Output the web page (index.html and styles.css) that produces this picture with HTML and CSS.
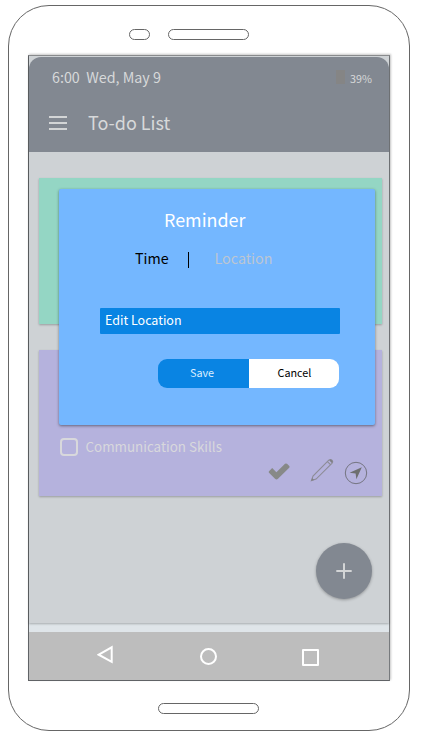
FILE: index.html
```html
<!DOCTYPE html>
<html lang="en">
<head>
<meta charset="utf-8">
<title>To-do List</title>
<link rel="stylesheet" href="styles.css">
</head>
<body>
<div class="phone">
  <div class="sensors"><span class="camera"></span><span class="speaker"></span></div>
  <div class="screen">
    <main class="app">
      <header class="header">
        <div class="status">
          <span class="datetime">6:00&nbsp; Wed, May 9</span>
          <span class="battery"></span>
          <span class="percent">39%</span>
        </div>
        <div class="toolbar">
          <span class="menu"><i></i><i></i><i></i></span>
          <h1>To-do List</h1>
        </div>
      </header>
      <section class="card green"></section>
      <section class="card purple">
        <div class="task"><span class="checkbox"></span><span class="task-name">Communication Skills</span></div>
        <div class="actions">
          <svg class="check" width="22" height="17" viewBox="0 0 22 17"><path d="M1 8.2 4.2 5 8.4 9.2 17 .7Q18 .1 19 .8L21.3 3Q22 4 21.2 4.8L10 15.8Q8.5 17 7 15.8L1 9.8Q.3 9 1 8.2Z" fill="#878988"/></svg>
          <svg class="pencil" width="24" height="24" viewBox="0 0 24 24"><path d="M1.4 22.6 3 18 18.8 2.2Q20.4.8 21.9 2.2T21.9 5.3L6.1 21.1ZM17.4 3.6 20.5 6.7" fill="none" stroke="#8d8c96" stroke-width="1.1"/><path d="M19.2 2.3Q20.6.9 22 2.2T21.7 5ZM1.2 22.8 2.2 20 4.2 22Z" fill="#808086"/></svg>
          <svg class="locate" width="24" height="24" viewBox="0 0 24 24"><circle cx="12" cy="12" r="10.7" fill="none" stroke="#747480" stroke-width="1"/><path d="M17.8 6.2 12.4 18.2 11.6 12.5 5.6 11.7Z" fill="#6e6f70"/></svg>
        </div>
      </section>
      <button class="fab" aria-label="Add"><svg width="16" height="16" viewBox="0 0 16 16"><path d="M8 .3V15.7M.3 8H15.7" stroke="#d3d5d6" stroke-width="2"/></svg></button>
    </main>
    <nav class="nav">
      <svg class="back" width="17" height="20" viewBox="0 0 17 20"><path d="M14.7 2.3V16.9L1.7 9.7Z" fill="none" stroke="#fff" stroke-width="2"/></svg>
      <span class="home"></span>
      <span class="recent"></span>
    </nav>
    <div class="dialog">
      <h2>Reminder</h2>
      <div class="tabs"><span class="time">Time</span><span class="divider"></span><span class="location">Location</span></div>
      <div class="field"><span>Edit Location</span></div>
      <div class="buttons"><button class="save">Save</button><button class="cancel">Cancel</button></div>
    </div>
  </div>
  <span class="bottom-slot"></span>
</div>
</body>
</html>
```
FILE: styles.css
```css
* { box-sizing: border-box; }
body {
  margin: 0;
  width: 422px;
  height: 743px;
  overflow: hidden;
  background: #fff;
  font-family: "Noto Sans CJK SC", "Noto Sans", sans-serif;
}
h1, h2 { margin: 0; font-weight: 400; }
button { border: 0; padding: 0; font: inherit; }
svg { display: block; flex: none; }
.phone {
  width: 402px;
  height: 726px;
  margin: 5px 0 0 8px;
  border: 1px solid #666;
  border-radius: 41px;
  padding-left: 19px;
  display: flex;
  flex-direction: column;
}
.sensors { display: flex; gap: 18px; padding: 23px 0 0 100px; height: 49px; flex: none; }
.camera, .speaker, .bottom-slot { height: 11px; border: 1px solid #666; border-radius: 6px; }
.camera { width: 21px; margin-left: 1px; }
.speaker { width: 81px; }
.bottom-slot { width: 101px; margin: 22px 0 0 130px; flex: none; }
.screen {
  position: relative;
  width: 362px;
  height: 626px;
  flex: none;
  border: 1px solid #606366;
  border-top-color: #8c8e90;
  border-right-color: #777a7d;
  background: #dfe5e9;
  box-shadow: 1px -1px 2px rgba(0, 0, 0, .22);
}
.app {
  height: 567px;
  padding-top: 1px;
  background: #ced2d5;
  box-shadow: 0 1px 2px rgba(0, 0, 0, .25);
}
.header { height: 95px; background: #828891; border-radius: 12px 12px 0 0; color: #d7d9da; }
.status { height: 41px; display: flex; align-items: center; padding-left: 23px; }
.datetime { width: 284px; margin-top: -2px; font-size: 14.3px; line-height: 20px; white-space: nowrap; }
.battery { width: 9px; height: 14px; margin-top: -2px; background: #858585; }
.percent { margin: 1px 0 0 5px; font-size: 10.8px; line-height: 16px; }
.toolbar { height: 50px; display: flex; align-items: center; padding-left: 20px; gap: 21px; }
.menu { width: 18px; display: grid; gap: 4px; }
.menu i { height: 2px; background: #d3d5d6; }
h1 { margin-top: -2px; font-size: 18px; line-height: 26px; white-space: nowrap; }
.card { width: 343px; height: 146px; margin-left: 10px; box-shadow: 0 1px 2px rgba(0, 0, 0, .26); }
.green { margin-top: 26px; background: #94d6c4; }
.purple { margin-top: 26px; padding-top: 87px; background: #b5b2dd; }
.task { display: flex; align-items: center; height: 20px; padding-left: 21px; gap: 7.5px; color: #d8d8dc; }
.checkbox { width: 18px; height: 18px; border: 2px solid #d8d8dc; border-radius: 4px; }
.task-name { margin-top: -2px; font-size: 13.4px; line-height: 20px; white-space: nowrap; }
.actions { display: flex; align-items: center; height: 28px; margin-left: 228.5px; }
.pencil { margin: -3px 0 0 20px; }
.locate { margin: 4px 0 0 10.5px; }
.fab {
  width: 56px;
  height: 56px;
  margin: 47px 0 0 287px;
  border-radius: 50%;
  background: #828891;
  box-shadow: 0 1px 3px rgba(0, 0, 0, .3);
  display: grid;
  place-items: center;
}
.nav { height: 48px; margin-top: 9px; background: #bdbdbd; display: flex; align-items: center; padding-left: 68px; }
.back { margin-top: -3px; }
.home { width: 17px; height: 17px; margin-left: 86px; border: 2px solid #fff; border-radius: 50%; }
.recent { width: 17px; height: 17px; margin: 3px 0 0 85px; border: 2px solid #fff; border-radius: 1px; }
.dialog {
  position: absolute;
  left: 30px;
  top: 133px;
  width: 316px;
  height: 236px;
  padding-top: 16px;
  background: #74b7ff;
  border-radius: 2px;
  box-shadow: 0 1px 3px rgba(0, 0, 0, .45);
  color: #fff;
}
h2 { margin-left: 105px; font-size: 17.9px; line-height: 28px; }
.tabs { display: flex; align-items: center; height: 22px; margin-top: 14px; padding-left: 76px; font-size: 14.3px; line-height: 20px; }
.time { width: 53px; color: #000; }
.divider { width: 1px; height: 16px; margin-top: 4px; background: #000; }
.location { margin-left: 25.5px; color: #bdc6d2; }
.field { width: 240px; height: 26px; margin: 39px 0 0 41px; padding-left: 5px; background: #0984e3; border-radius: 1px; font-size: 12.5px; line-height: 23px; }
.buttons { display: flex; width: 181px; height: 29px; margin: 25px 0 0 99px; border-radius: 9px; overflow: hidden; font-size: 10.8px; line-height: 27px; }
.save { width: 91px; padding: 0 3px 3px 0; background: #0984e3; color: #dcefff; }
.cancel { flex: 1; padding: 0 0 3px 1px; background: #fff; color: #000; }
```
